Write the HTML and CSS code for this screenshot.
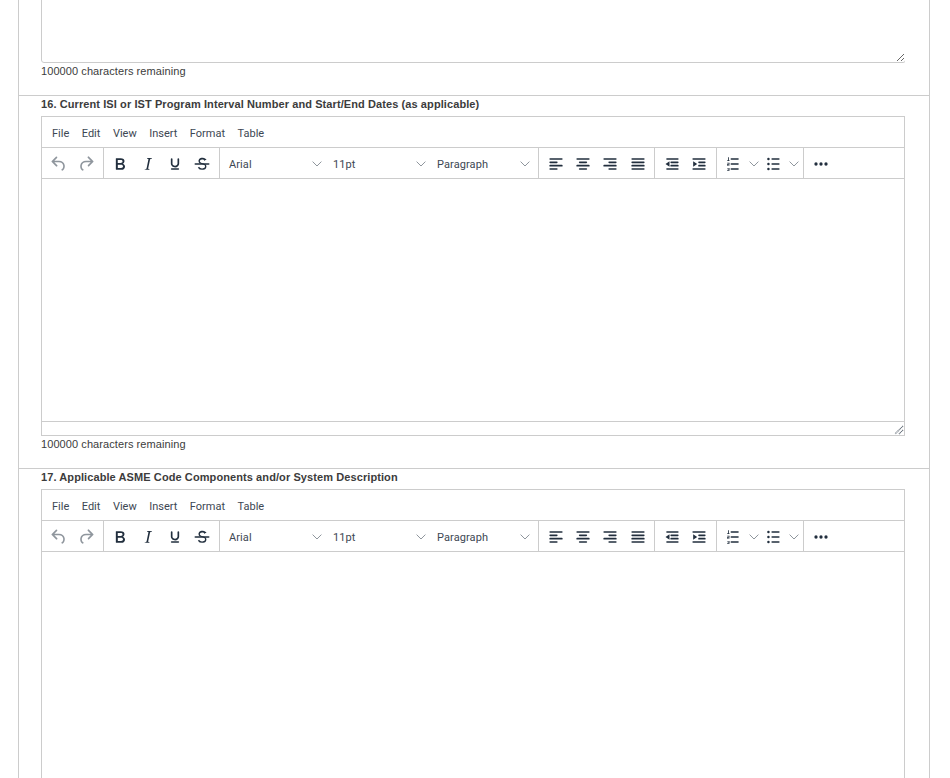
FILE: index.html
```html
<!DOCTYPE html>
<html lang="en">
<head>
<meta charset="utf-8">
<title>Form</title>
<link rel="stylesheet" href="styles.css">
</head>
<body>
<svg class="defs" width="0" height="0" aria-hidden="true">
  <defs>
    <symbol id="i-undo" viewBox="0 0 24 24"><path d="M6.4 8H12c3.7 0 6.2 2 6.8 5.1.6 2.7-.4 5.6-2.3 6.8a1 1 0 0 1-1-1.8c1.1-.6 1.8-2.7 1.4-4.6-.5-2.1-2.1-3.5-4.9-3.5H6.4l3.3 3.3a1 1 0 1 1-1.4 1.4l-5-5a1 1 0 0 1 0-1.4l5-5a1 1 0 0 1 1.4 1.4L6.4 8z"/></symbol>
    <symbol id="i-redo" viewBox="0 0 24 24"><path d="M17.6 10H12c-2.8 0-4.4 1.4-4.9 3.5-.4 2 .3 4 1.4 4.6a1 1 0 1 1-1 1.8c-2-1.2-2.9-4.1-2.3-6.8.6-3 3.2-5.1 6.8-5.1h5.6l-3.3-3.3a1 1 0 1 1 1.4-1.4l5 5a1 1 0 0 1 0 1.4l-5 5a1 1 0 0 1-1.4-1.4l3.3-3.3z"/></symbol>
    <symbol id="i-bold" viewBox="0 0 24 24"><path d="M7.8 19c-.3 0-.5 0-.6-.2l-.2-.5V5.7c0-.2 0-.4.2-.5l.6-.2h5c1.5 0 2.7.3 3.5 1 .7.6 1.1 1.4 1.1 2.5a3 3 0 0 1-.6 1.9c-.4.6-1 1-1.6 1.2.4.1.9.3 1.3.6s.8.7 1 1.2c.4.4.5 1 .5 1.6 0 1.3-.4 2.3-1.3 3-.8.7-2.1 1-3.8 1H7.8zm5-8.3c.6 0 1.2-.1 1.6-.5.4-.3.6-.7.6-1.3 0-1.1-.8-1.7-2.3-1.7H9.3v3.5h3.4zm.5 6c.7 0 1.3-.1 1.7-.4.4-.4.6-.9.6-1.5s-.2-1-.7-1.4c-.4-.3-1-.4-2-.4H9.4v3.8h4z"/></symbol>
    <symbol id="i-italic" viewBox="0 0 24 24"><path d="M16.7 4.7l-.1.9h-.3c-.6 0-1 0-1.4.3-.3.3-.4.6-.5 1.1l-2.1 9.8v.6c0 .5.4.8 1.4.8h.2l-.2.8H8l.2-.8h.2c1.1 0 1.8-.5 2-1.5l2-9.8.1-.5c0-.6-.4-.8-1.4-.8h-.3l.2-.9h5.8z"/></symbol>
    <symbol id="i-underline" viewBox="0 0 24 24"><path d="M16 5c.6 0 1 .4 1 1v5.5a4 4 0 0 1-.4 1.8l-1 1.4a5.3 5.3 0 0 1-5.5 1 5 5 0 0 1-1.6-1c-.5-.4-.8-.9-1.1-1.4a4 4 0 0 1-.4-1.8V6c0-.6.4-1 1-1s1 .4 1 1v5.5c0 .3 0 .6.2 1l.6.7a3.3 3.3 0 0 0 2.2.8 3.4 3.4 0 0 0 2.2-.8c.3-.2.4-.5.6-.8l.2-.9V6c0-.6.4-1 1-1zM8 17h8c.6 0 1 .4 1 1s-.4 1-1 1H8a1 1 0 0 1 0-2z"/></symbol>
    <symbol id="i-strike" viewBox="0 0 24 24"><path d="M15.6 8.5c-.5-.7-1-1.1-1.3-1.3-.6-.4-1.3-.6-2-.6-2.7 0-2.8 1.7-2.8 2.1 0 1.6 1.8 2 3.2 2.3 4.4.9 4.6 2.8 4.6 3.9 0 1.4-.7 4.1-5 4.1A6.2 6.2 0 0 1 7 16.4l1.5-1.1c.4.6 1.6 2 3.7 2 1.6 0 2.5-.4 3-1 .3-.4.4-.9.4-1.3 0-.8-.2-2-3-2.6-3.2-.7-4.8-1.8-4.8-4 0-1.6 1-3.9 4.9-3.9 1.3 0 2.4.4 3.4 1.1.5.4 1 .8 1.4 1.4l-1.9.5z"/><path d="M4 11h16a1 1 0 0 1 0 2H4a1 1 0 0 1 0-2z"/></symbol>
    <symbol id="i-left" viewBox="0 0 24 24"><path d="M5 5h14a1 1 0 0 1 0 2H5a1 1 0 1 1 0-2zm0 4h8a1 1 0 0 1 0 2H5a1 1 0 1 1 0-2zm0 4h14a1 1 0 0 1 0 2H5a1 1 0 0 1 0-2zm0 4h8a1 1 0 0 1 0 2H5a1 1 0 0 1 0-2z"/></symbol>
    <symbol id="i-center" viewBox="0 0 24 24"><path d="M5 5h14a1 1 0 0 1 0 2H5a1 1 0 1 1 0-2zm3 4h8a1 1 0 0 1 0 2H8a1 1 0 1 1 0-2zm-3 4h14a1 1 0 0 1 0 2H5a1 1 0 0 1 0-2zm3 4h8a1 1 0 0 1 0 2H8a1 1 0 0 1 0-2z"/></symbol>
    <symbol id="i-right" viewBox="0 0 24 24"><path d="M5 5h14a1 1 0 0 1 0 2H5a1 1 0 1 1 0-2zm6 4h8a1 1 0 0 1 0 2h-8a1 1 0 0 1 0-2zm-6 4h14a1 1 0 0 1 0 2H5a1 1 0 0 1 0-2zm6 4h8a1 1 0 0 1 0 2h-8a1 1 0 0 1 0-2z"/></symbol>
    <symbol id="i-justify" viewBox="0 0 24 24"><path d="M5 5h14a1 1 0 0 1 0 2H5a1 1 0 1 1 0-2zm0 4h14a1 1 0 0 1 0 2H5a1 1 0 1 1 0-2zm0 4h14a1 1 0 0 1 0 2H5a1 1 0 0 1 0-2zm0 4h14a1 1 0 0 1 0 2H5a1 1 0 0 1 0-2z"/></symbol>
    <symbol id="i-outdent" viewBox="0 0 24 24"><path d="M6 5h13a1 1 0 0 1 0 2H6a1 1 0 1 1 0-2zm5 4h8a1 1 0 0 1 0 2h-8a1 1 0 0 1 0-2zm0 4h8a1 1 0 0 1 0 2h-8a1 1 0 0 1 0-2zm-5 4h13a1 1 0 0 1 0 2H6a1 1 0 0 1 0-2zM9 8.8v6.4L4.2 12z"/></symbol>
    <symbol id="i-indent" viewBox="0 0 24 24"><path d="M5 5h14a1 1 0 0 1 0 2H5a1 1 0 1 1 0-2zm7 4h7a1 1 0 0 1 0 2h-7a1 1 0 0 1 0-2zm0 4h7a1 1 0 0 1 0 2h-7a1 1 0 0 1 0-2zm-7 4h14a1 1 0 0 1 0 2H5a1 1 0 0 1 0-2zM5 8.8L9.8 12 5 15.2z"/></symbol>
    <symbol id="i-numlist" viewBox="0 0 24 24"><path d="M10 17h8a1 1 0 0 1 0 2h-8a1 1 0 0 1 0-2zm0-6h8a1 1 0 0 1 0 2h-8a1 1 0 0 1 0-2zm0-6h8a1 1 0 0 1 0 2h-8a1 1 0 1 1 0-2z"/><path d="M6 4h1v3.5H6z M5 7.6h2.8v.7H5z M5 10.5h2.8v2.3H5.9v.7h1.9v.7H5v-2.2h1.9v-.7H5z M5 16.8h2.8v3.2H5v-.7h1.9v-.6H5.6v-.7h1.3v-.5H5z"/></symbol>
    <symbol id="i-bullist" viewBox="0 0 24 24"><path d="M11 5h8a1 1 0 0 1 0 2h-8a1 1 0 0 1 0-2zm0 6h8a1 1 0 0 1 0 2h-8a1 1 0 0 1 0-2zm0 6h8a1 1 0 0 1 0 2h-8a1 1 0 0 1 0-2z"/><circle cx="6.5" cy="6" r="1.5"/><circle cx="6.5" cy="12" r="1.5"/><circle cx="6.5" cy="18" r="1.5"/></symbol>
    <symbol id="i-more" viewBox="0 0 24 24"><circle cx="6" cy="12" r="2"/><circle cx="12" cy="12" r="2"/><circle cx="18" cy="12" r="2"/></symbol>
    <symbol id="i-chev" viewBox="0 0 10 10"><path d="M.6 2.6L5 7l4.4-4.4" fill="none" stroke="currentColor" stroke-width="1"/></symbol>
    <symbol id="i-grip" viewBox="0 0 10 10"><path d="M9 1L1 9M9 5L5 9" fill="none" stroke="currentColor" stroke-width="1.3" stroke-dasharray="1 .6"/></symbol>
  </defs>
</svg>

<main class="panel">
  <section class="field">
    <div class="clip"><textarea class="plain" aria-label="Previous field"></textarea></div>
    <p class="count">100000 characters remaining</p>
  </section>

  <section class="field">
    <h2 class="label">16. Current ISI or IST Program Interval Number and Start/End Dates (as applicable)</h2>
    <div class="editor">
      <nav class="menubar">
        <span class="menu">File</span><span class="menu">Edit</span><span class="menu">View</span><span class="menu">Insert</span><span class="menu">Format</span><span class="menu">Table</span>
      </nav>
      <div class="toolbar">
        <div class="group">
          <span class="btn off"><svg class="ico"><use href="#i-undo"/></svg></span>
          <span class="btn off"><svg class="ico"><use href="#i-redo"/></svg></span>
        </div>
        <div class="group">
          <span class="btn"><svg class="ico"><use href="#i-bold"/></svg></span>
          <span class="btn"><svg class="ico"><use href="#i-italic"/></svg></span>
          <span class="btn"><svg class="ico"><use href="#i-underline"/></svg></span>
          <span class="btn"><svg class="ico"><use href="#i-strike"/></svg></span>
        </div>
        <div class="group">
          <span class="select">Arial<svg class="chev"><use href="#i-chev"/></svg></span>
          <span class="select">11pt<svg class="chev"><use href="#i-chev"/></svg></span>
          <span class="select">Paragraph<svg class="chev"><use href="#i-chev"/></svg></span>
        </div>
        <div class="group">
          <span class="btn"><svg class="ico"><use href="#i-left"/></svg></span>
          <span class="btn"><svg class="ico"><use href="#i-center"/></svg></span>
          <span class="btn"><svg class="ico"><use href="#i-right"/></svg></span>
          <span class="btn"><svg class="ico"><use href="#i-justify"/></svg></span>
        </div>
        <div class="group">
          <span class="btn"><svg class="ico"><use href="#i-outdent"/></svg></span>
          <span class="btn"><svg class="ico"><use href="#i-indent"/></svg></span>
        </div>
        <div class="group">
          <span class="split"><svg class="ico"><use href="#i-numlist"/></svg><svg class="chev"><use href="#i-chev"/></svg></span>
          <span class="split"><svg class="ico"><use href="#i-bullist"/></svg><svg class="chev"><use href="#i-chev"/></svg></span>
        </div>
        <div class="group">
          <span class="btn"><svg class="ico"><use href="#i-more"/></svg></span>
        </div>
      </div>
      <div class="content"></div>
      <div class="status"><svg class="grip"><use href="#i-grip"/></svg></div>
    </div>
    <p class="count">100000 characters remaining</p>
  </section>

  <section class="field">
    <h2 class="label">17. Applicable ASME Code Components and/or System Description</h2>
    <div class="editor">
      <nav class="menubar">
        <span class="menu">File</span><span class="menu">Edit</span><span class="menu">View</span><span class="menu">Insert</span><span class="menu">Format</span><span class="menu">Table</span>
      </nav>
      <div class="toolbar">
        <div class="group">
          <span class="btn off"><svg class="ico"><use href="#i-undo"/></svg></span>
          <span class="btn off"><svg class="ico"><use href="#i-redo"/></svg></span>
        </div>
        <div class="group">
          <span class="btn"><svg class="ico"><use href="#i-bold"/></svg></span>
          <span class="btn"><svg class="ico"><use href="#i-italic"/></svg></span>
          <span class="btn"><svg class="ico"><use href="#i-underline"/></svg></span>
          <span class="btn"><svg class="ico"><use href="#i-strike"/></svg></span>
        </div>
        <div class="group">
          <span class="select">Arial<svg class="chev"><use href="#i-chev"/></svg></span>
          <span class="select">11pt<svg class="chev"><use href="#i-chev"/></svg></span>
          <span class="select">Paragraph<svg class="chev"><use href="#i-chev"/></svg></span>
        </div>
        <div class="group">
          <span class="btn"><svg class="ico"><use href="#i-left"/></svg></span>
          <span class="btn"><svg class="ico"><use href="#i-center"/></svg></span>
          <span class="btn"><svg class="ico"><use href="#i-right"/></svg></span>
          <span class="btn"><svg class="ico"><use href="#i-justify"/></svg></span>
        </div>
        <div class="group">
          <span class="btn"><svg class="ico"><use href="#i-outdent"/></svg></span>
          <span class="btn"><svg class="ico"><use href="#i-indent"/></svg></span>
        </div>
        <div class="group">
          <span class="split"><svg class="ico"><use href="#i-numlist"/></svg><svg class="chev"><use href="#i-chev"/></svg></span>
          <span class="split"><svg class="ico"><use href="#i-bullist"/></svg><svg class="chev"><use href="#i-chev"/></svg></span>
        </div>
        <div class="group">
          <span class="btn"><svg class="ico"><use href="#i-more"/></svg></span>
        </div>
      </div>
      <div class="content"></div>
    </div>
  </section>
</main>
</body>
</html>
```

FILE: styles.css
```css
* { box-sizing: border-box; }
html, body { margin: 0; height: 778px; overflow: hidden; background: #fff; }
body { font-family: "Roboto", "Liberation Sans", sans-serif; color: #333; }
.defs { position: absolute; }

.panel {
  margin: 0 20px 0 18px;
  border-left: 1px solid #ccc;
  border-right: 1px solid #ccc;
  height: 778px;
  overflow: hidden;
}
.field {
  padding: 0 24px 16px 22px;
  border-bottom: 1px solid #ccc;
}
.clip {
  height: 63px;
  overflow: hidden;
  display: flex;
  align-items: flex-end;
}
.plain {
  display: block;
  flex: none;
  width: 865px;
  height: 90px;
  border: 1px solid #ccc;
  border-radius: 3px;
  background: #fff;
  outline: none;
  margin: 0;
}
.count {
  margin: 0;
  font-family: "Liberation Sans", Arial, sans-serif;
  font-size: 11px;
  line-height: 16px;
  letter-spacing: .08px;
  color: #3c3c3c;
}
.label {
  margin: 0 0 4px;
  font-family: "Liberation Sans", Arial, sans-serif;
  font-size: 11px;
  line-height: 16px;
  font-weight: 700;
  letter-spacing: .09px;
  color: #3c3c3c;
}

.editor {
  border: 1px solid #ccc;
  width: 864px;
  color: #222f3e;
}
.menubar {
  display: flex;
  align-items: center;
  height: 31px;
  padding: 2px 0 0 10px;
  border-bottom: 1px solid #ccc;
  font-size: 11px;
  color: #3d4753;
}
.menu { margin-right: 12.5px; }

.toolbar {
  display: flex;
  height: 31px;
  border-bottom: 1px solid #ccc;
}
.group {
  display: flex;
  align-items: center;
  padding: 0 3px;
  border-left: 1px solid #ccc;
  margin-bottom: -1px;
}
.group:first-child { border-left: 0; }
.btn {
  display: flex;
  align-items: center;
  justify-content: center;
  width: 27.33px;
  height: 28px;
}
.btn.off .ico { opacity: .5; }
.ico { width: 20px; height: 20px; fill: #222f3e; flex: none; }
.chev { width: 10px; height: 10px; color: #222f3e; opacity: .5; flex: none; }
.select {
  display: flex;
  align-items: center;
  justify-content: space-between;
  width: 104px;
  padding: 1px 5px 0 6px;
  font-size: 11px;
  letter-spacing: .1px;
  color: #3d4753;
}
.split {
  display: flex;
  align-items: center;
  width: 40px;
  padding-left: 3px;
}
.split .chev { margin-left: 6px; }

.content { height: 242px; background: #fff; }
.status {
  display: flex;
  justify-content: flex-end;
  align-items: flex-end;
  height: 14px;
  border-top: 1px solid #ccc;
}
.grip { width: 10px; height: 10px; color: #222f3e; opacity: .7; }
```
